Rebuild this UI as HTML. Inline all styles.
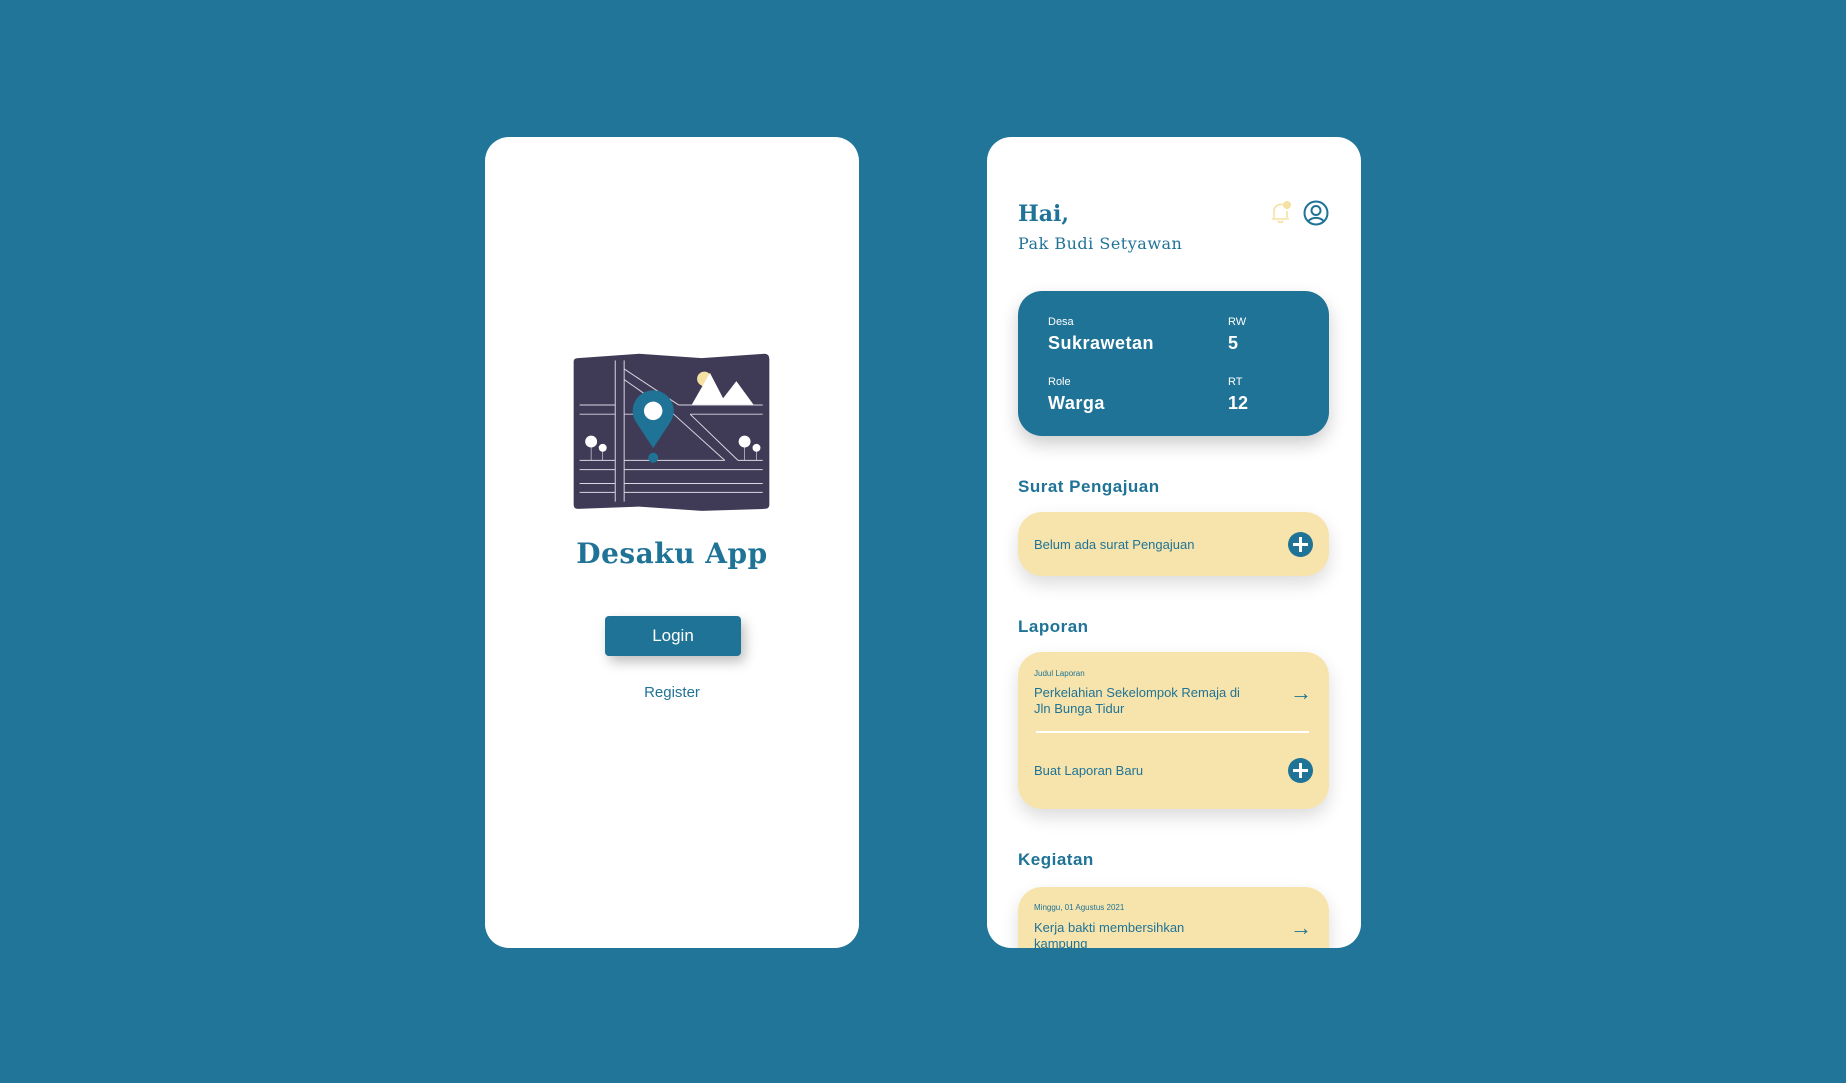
<!DOCTYPE html>
<html><head><meta charset="utf-8"><style>
*{margin:0;padding:0;box-sizing:border-box}
body{width:1846px;height:1083px;background:#207598;position:relative;overflow:hidden;font-family:"Liberation Sans",sans-serif;color:#1f7396}
.card{position:absolute;top:137px;width:374px;height:811px;background:#fff;border-radius:24px;overflow:hidden}
.serif{font-family:"DejaVu Serif","Liberation Serif",serif}
.abs{position:absolute}
.y{position:absolute;left:31px;width:311px;background:#f7e4ac;border-radius:24px;box-shadow:0 8px 18px rgba(0,0,0,.14)}
.plus{position:absolute;width:25px;height:25px;border-radius:50%;background:#1f7396}
.plus:before,.plus:after{content:"";position:absolute;background:#fff;left:5px;top:11px;width:15px;height:3px}
.plus:after{left:11px;top:5px;width:3px;height:15px}
.arr{position:absolute;font-size:22px;line-height:1}
</style></head><body>
<div class="card" style="left:485px">
 <svg class="abs" style="left:88px;top:215px" width="198" height="161" viewBox="40 38 600 485">
  <path d="M42,65 Q42,55 55,55 L240,42 L430,55 L620,42 Q635,42 635,58 L635,500 Q635,512 620,512 L430,518 L240,505 L55,512 Q42,512 42,500 Z" fill="#3f3b57"/>
  <g stroke="#d9d7e2" stroke-width="3" fill="none">
   <path d="M168,62V490M195,62V490"/>
   <path d="M60,197H168M60,225H168M195,225H345M360,197H615M395,225H615"/>
   <path d="M195,88L360,197M195,120L345,225M345,225L500,365M395,225L540,365"/>
   <path d="M60,365H168M195,365H500M540,365H615M60,393H168M195,393H615M60,435H168M195,435H615M60,462H168M195,462H615"/>
   <path d="M95,308V365M130,327V365M560,308V365M596,327V365" stroke-width="2"/>
  </g>
  <circle cx="438" cy="118" r="22" fill="#f5e1a4"/>
  <path d="M400,196L455,100L505,196ZM480,196L535,125L587,196Z" fill="#fff"/>
  <circle cx="95" cy="308" r="18" fill="#fff"/><circle cx="130" cy="327" r="12" fill="#fff"/>
  <circle cx="560" cy="308" r="18" fill="#fff"/><circle cx="596" cy="327" r="12" fill="#fff"/>
  <path d="M283,153a62,62 0 0 1 52,96L283,328L231,249a62,62 0 0 1 52,-96Z" fill="#1f7396"/>
  <circle cx="283" cy="215" r="28" fill="#fff"/>
  <circle cx="283" cy="357" r="15" fill="#1f7396"/>
 </svg>
 <div class="abs serif" style="left:0;width:374px;top:400px;text-align:center;font-size:28px;font-weight:bold;letter-spacing:0.5px">Desaku App</div>
 <div class="abs" style="left:120px;top:479px;width:136px;height:40px;background:#1f7396;border-radius:4px;color:#fff;font-size:17px;text-align:center;line-height:40px;box-shadow:4px 6px 12px rgba(0,0,0,.25)">Login</div>
 <div class="abs" style="left:0;width:374px;top:547px;text-align:center;font-size:15px">Register</div>
</div>
<div class="card" style="left:987px">
 <div class="abs serif" style="left:31px;top:64px;font-size:22px;font-weight:bold">Hai,</div>
 <div class="abs serif" style="left:31px;top:97px;font-size:16px;letter-spacing:.5px">Pak Budi Setyawan</div>
 <svg class="abs" style="left:282px;top:62px" width="24" height="26" viewBox="0 0 24 26"><path d="M5,19V12a7,7 0 0 1 10,-6M18,12V19M3,20H20M9,22a3,3 0 0 0 5,0" stroke="#f5e1a4" stroke-width="1.6" fill="none"/><circle cx="18" cy="6" r="4" fill="#f5e1a4"/></svg>
 <svg class="abs" style="left:316px;top:63px" width="26" height="26" viewBox="0 0 26 26"><circle cx="13" cy="13" r="11.5" stroke="#1f7396" stroke-width="2" fill="none"/><circle cx="13" cy="10.5" r="4.5" stroke="#1f7396" stroke-width="2" fill="none"/><path d="M5.5,21a9,7 0 0 1 15,0" stroke="#1f7396" stroke-width="2" fill="none"/></svg>
 <div class="abs" style="left:31px;top:154px;width:311px;height:145px;background:#1f7396;border-radius:24px;box-shadow:0 8px 18px rgba(0,0,0,.2);color:#fff">
  <div class="abs" style="left:30px;top:25px;font-size:11px">Desa</div>
  <div class="abs" style="left:30px;top:42px;font-size:18px;font-weight:bold;letter-spacing:.5px">Sukrawetan</div>
  <div class="abs" style="left:210px;top:25px;font-size:11px">RW</div>
  <div class="abs" style="left:210px;top:42px;font-size:18px;font-weight:bold">5</div>
  <div class="abs" style="left:30px;top:85px;font-size:11px">Role</div>
  <div class="abs" style="left:30px;top:102px;font-size:18px;font-weight:bold;letter-spacing:.5px">Warga</div>
  <div class="abs" style="left:210px;top:85px;font-size:11px">RT</div>
  <div class="abs" style="left:210px;top:102px;font-size:18px;font-weight:bold">12</div>
 </div>
 <div class="abs" style="left:31px;top:340px;font-size:17px;font-weight:bold;letter-spacing:.5px">Surat Pengajuan</div>
 <div class="y" style="top:375px;height:64px">
  <div class="abs" style="left:16px;top:25px;font-size:13px">Belum ada surat Pengajuan</div>
  <div class="plus" style="left:270px;top:20px"></div>
 </div>
 <div class="abs" style="left:31px;top:480px;font-size:17px;font-weight:bold;letter-spacing:.5px">Laporan</div>
 <div class="y" style="top:515px;height:157px">
  <div class="abs" style="left:16px;top:17px;font-size:8px">Judul Laporan</div>
  <div class="abs" style="left:16px;top:33px;font-size:13px;line-height:16px">Perkelahian Sekelompok Remaja di<br>Jln Bunga Tidur</div>
  <div class="arr" style="left:272px;top:30px">→</div>
  <div class="abs" style="left:18px;top:79px;width:273px;height:2px;background:#fff"></div>
  <div class="abs" style="left:16px;top:111px;font-size:13px">Buat Laporan Baru</div>
  <div class="plus" style="left:270px;top:106px"></div>
 </div>
 <div class="abs" style="left:31px;top:713px;font-size:17px;font-weight:bold;letter-spacing:.5px">Kegiatan</div>
 <div class="y" style="top:750px;height:120px">
  <div class="abs" style="left:16px;top:16px;font-size:8px">Minggu, 01 Agustus 2021</div>
  <div class="abs" style="left:16px;top:33px;font-size:13px;line-height:16px">Kerja bakti membersihkan<br>kampung</div>
  <div class="arr" style="left:272px;top:30px">→</div>
 </div>
</div>
</body></html>
